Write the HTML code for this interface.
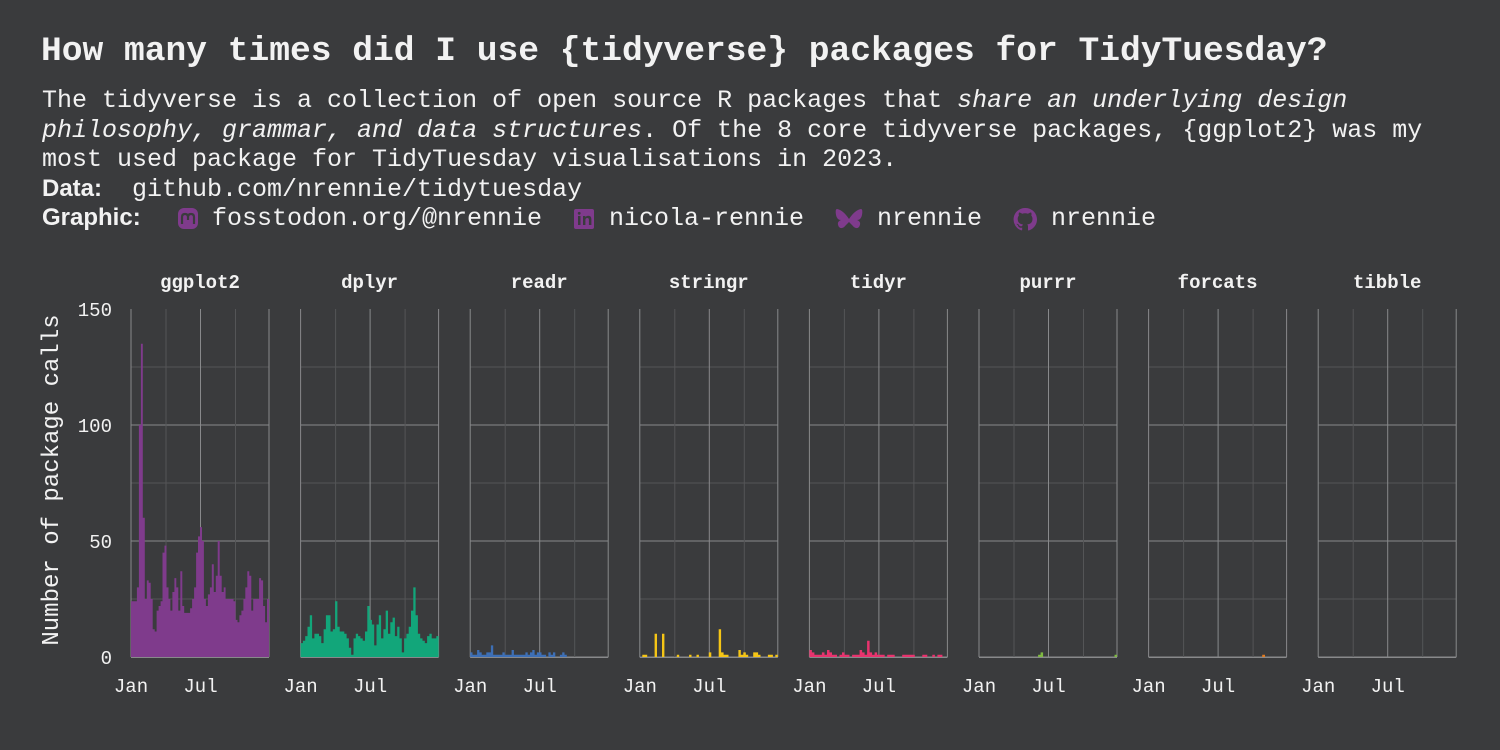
<!DOCTYPE html>
<html><head><meta charset="utf-8"><style>
body{margin:0;width:1500px;height:750px;background:#3a3b3d;overflow:hidden;position:relative;font-family:"Liberation Mono","DejaVu Sans Mono",monospace;color:#f2f2f2}
.t{position:absolute;white-space:pre;}
.title{left:41px;top:32px;font-size:34.6px;font-weight:bold;}
.b{font-size:25px;}
b{font-weight:bold;font-family:"Liberation Sans",sans-serif;font-size:24px}
i{font-style:italic}
svg{position:absolute;left:0;top:0}
</style></head><body>
<div class="t title">How many times did I use {tidyverse} packages for TidyTuesday?</div>
<div class="t b" style="left:42px;top:86px">The tidyverse is a collection of open source R packages that <i>share an underlying design</i></div>
<div class="t b" style="left:42px;top:116px"><i>philosophy, grammar, and data structures</i>. Of the 8 core tidyverse packages, {ggplot2} was my</div>
<div class="t b" style="left:42px;top:145px">most used package for TidyTuesday visualisations in 2023.</div>
<div class="t b" style="left:42px;top:175px"><b>Data:</b></div>
<div class="t b" style="left:132px;top:175px">github.com/nrennie/tidytuesday</div>
<div class="t b" style="left:42px;top:204px"><b>Graphic:</b></div>
<div class="t b" style="left:212px;top:204px">fosstodon.org/@nrennie</div>
<div class="t b" style="left:609px;top:204px">nicola-rennie</div>
<div class="t b" style="left:877px;top:204px">nrennie</div>
<div class="t b" style="left:1051px;top:204px">nrennie</div>
<svg width="1500" height="750" id="s">
<g fill="#7f3b8c">
<rect x="178" y="208" width="20" height="21" rx="6"/>
<path d="M182 224v-7q0-3 3-3q3 0 3 3v3v-3q0-3 3-3q3 0 3 3v7" stroke="#3a3b3d" stroke-width="2.2" fill="none"/>
<rect x="574" y="209" width="20" height="20" rx="2"/>
<path d="M578 216h2.5v9h-2.5zM583 216h2.4v1.3q1-1.6 3-1.6q3 0 3 3.5v5.8h-2.5v-5q0-2-1.5-2q-2 0-2 2v5h-2.4z" fill="#3a3b3d"/>
<circle cx="579.2" cy="213.3" r="1.4" fill="#3a3b3d"/>
<path d="M849 219q-6-9-12-10q-2 0-1 6q1 5 5 5q-5 2-2 7q3 3 7-2l3-3l3 3q4 5 7 2q3-5-2-7q4 0 5-5q1-6-1-6q-6 1-12 10z"/>
<path d="M1025 208a11.5 11.5 0 0 0-3.6 22.4c.6.1.8-.3.8-.6v-2.2c-3.2.7-3.9-1.4-3.9-1.4-.5-1.300-1.3-1.7-1.3-1.7-1-.7.1-.7.1-.7 1.2.1 1.8 1.2 1.8 1.2 1 1.8 2.7 1.3 3.4 1 .1-.8.4-1.3.7-1.6-2.6-.3-5.3-1.3-5.3-5.7 0-1.3.5-2.3 1.2-3.1-.1-.3-.5-1.5.1-3.1 0 0 1-.3 3.2 1.2a11 11 0 0 1 5.8 0c2.2-1.5 3.2-1.2 3.2-1.2.6 1.6.2 2.8.1 3.1.7.8 1.2 1.8 1.2 3.1 0 4.4-2.7 5.4-5.3 5.7.4.4.8 1.1.8 2.2v3.3c0 .3.2.7.8.6A11.5 11.5 0 0 0 1025 208z"/>
</g>
<text x="58" y="480" transform="rotate(-90 58 480)" text-anchor="middle" font-size="24" fill="#f2f2f2" font-family="Liberation Mono,monospace">Number of package calls</text>
<g font-size="19" fill="#f2f2f2" font-family="Liberation Mono,monospace" text-anchor="end">
<text x="112" y="316">150</text><text x="112" y="432">100</text><text x="112" y="548">50</text><text x="112" y="664">0</text>
</g>
<g id="p"></g>
</svg>
<script>
var names=["ggplot2","dplyr","readr","stringr","tidyr","purrr","forcats","tibble"];
var cols=["#7f3b8c","#12a67a","#3d6fb6","#f5c516","#e8336e","#7fb942","#e07b22","#999"];
var data=[
[24,24,24,30,100,135,60,25,33,32,25,12,11,20,22,24,45,48,30,25,20,28,34,30,20,37,22,19,19,19,21,25,30,45,52,56,50,25,22,27,30,40,28,35,50,35,28,30,25,25,25,25,24,16,15,18,20,25,30,37,35,20,25,25,25,34,33,22,15,25],
[6,7,9,13,18,8,10,10,9,6,12,18,18,11,12,24,13,11,11,10,8,4,1,8,10,9,8,7,11,22,16,14,5,14,18,8,12,20,10,15,17,9,13,8,2,8,10,13,20,30,18,10,8,7,6,9,10,8,8,9],
[2,1,1,3,2,1,1,2,2,5,1,1,1,1,2,1,1,1,3,1,1,1,1,1,2,1,2,3,1,2,2,1,1,0,2,1,2,0,0,1,2,1,0,0,0,0,0,0,0,0,0,0,0,0,0,0,0,0,0,0],
[0,1,1,0,0,0,10,0,0,10,0,0,0,0,0,1,0,0,0,0,1,0,0,1,0,0,0,0,2,0,0,0,12,2,1,1,0,0,0,0,3,1,2,1,0,0,2,2,1,0,0,0,1,1,0,1],
[3,2,1,1,1,2,1,3,2,1,1,0,1,2,1,1,0,1,1,1,3,2,1,7,2,1,2,1,1,1,0,1,1,1,0,0,0,1,1,1,1,1,0,0,0,1,1,0,0,1,0,1,1,0,0],
[0,0,0,0,0,0,0,0,0,0,0,0,0,0,0,0,0,0,0,0,0,0,0,0,1,2,0,0,0,0,0,0,0,0,0,0,0,0,0,0,0,0,0,0,0,0,0,0,0,0,0,0,0,0,0,1],
[0,0,0,0,0,0,0,0,0,0,0,0,0,0,0,0,0,0,0,0,0,0,0,0,0,0,0,0,0,0,0,0,0,0,0,0,0,0,0,0,0,0,1,0,0,0,0,0,0,0,0],
[0]];
var h="";var ty=657,sc=348/150;
for(var k=0;k<8;k++){
 var x0=131+k*169.6,w=138;
 for(var v=0;v<150;v+=25){var y=ty-v*sc;h+='<line x1="'+x0+'" x2="'+(x0+w)+'" y1="'+y+'" y2="'+y+'" stroke="'+(v%50==0?'#88898b':'#545557')+'" stroke-width="1"/>';}
 var vx=[0,35,69.5,104.5,138];
 for(var j=0;j<5;j++){h+='<line x1="'+(x0+vx[j])+'" x2="'+(x0+vx[j])+'" y1="309" y2="657" stroke="'+(j%2==0?'#88898b':'#545557')+'"/>';}
 var d=data[k],n=d.length,p="M"+x0+","+ty;
 for(var i=0;i<n;i++){var xa=x0+i*w/n,xb=x0+(i+1)*w/n,y=ty-d[i]*sc;p+=" L"+xa.toFixed(1)+","+y.toFixed(1)+" L"+xb.toFixed(1)+","+y.toFixed(1);}
 p+=" L"+(x0+w)+","+ty+"Z";
 h+='<path d="'+p+'" fill="'+cols[k]+'"/>';
 h+='<line x1="'+x0+'" x2="'+(x0+w)+'" y1="657.5" y2="657.5" stroke="#88898b"/>';
 h+='<text x="'+(x0+69)+'" y="288" text-anchor="middle" font-size="19" font-weight="bold" fill="#f2f2f2" font-family="Liberation Mono,monospace">'+names[k]+'</text>';
 h+='<text x="'+x0+'" y="692" text-anchor="middle" font-size="19" fill="#f2f2f2" font-family="Liberation Mono,monospace">Jan</text>';
 h+='<text x="'+(x0+69.5)+'" y="692" text-anchor="middle" font-size="19" fill="#f2f2f2" font-family="Liberation Mono,monospace">Jul</text>';
}
document.getElementById("p").innerHTML=h;
</script>
</body></html>
